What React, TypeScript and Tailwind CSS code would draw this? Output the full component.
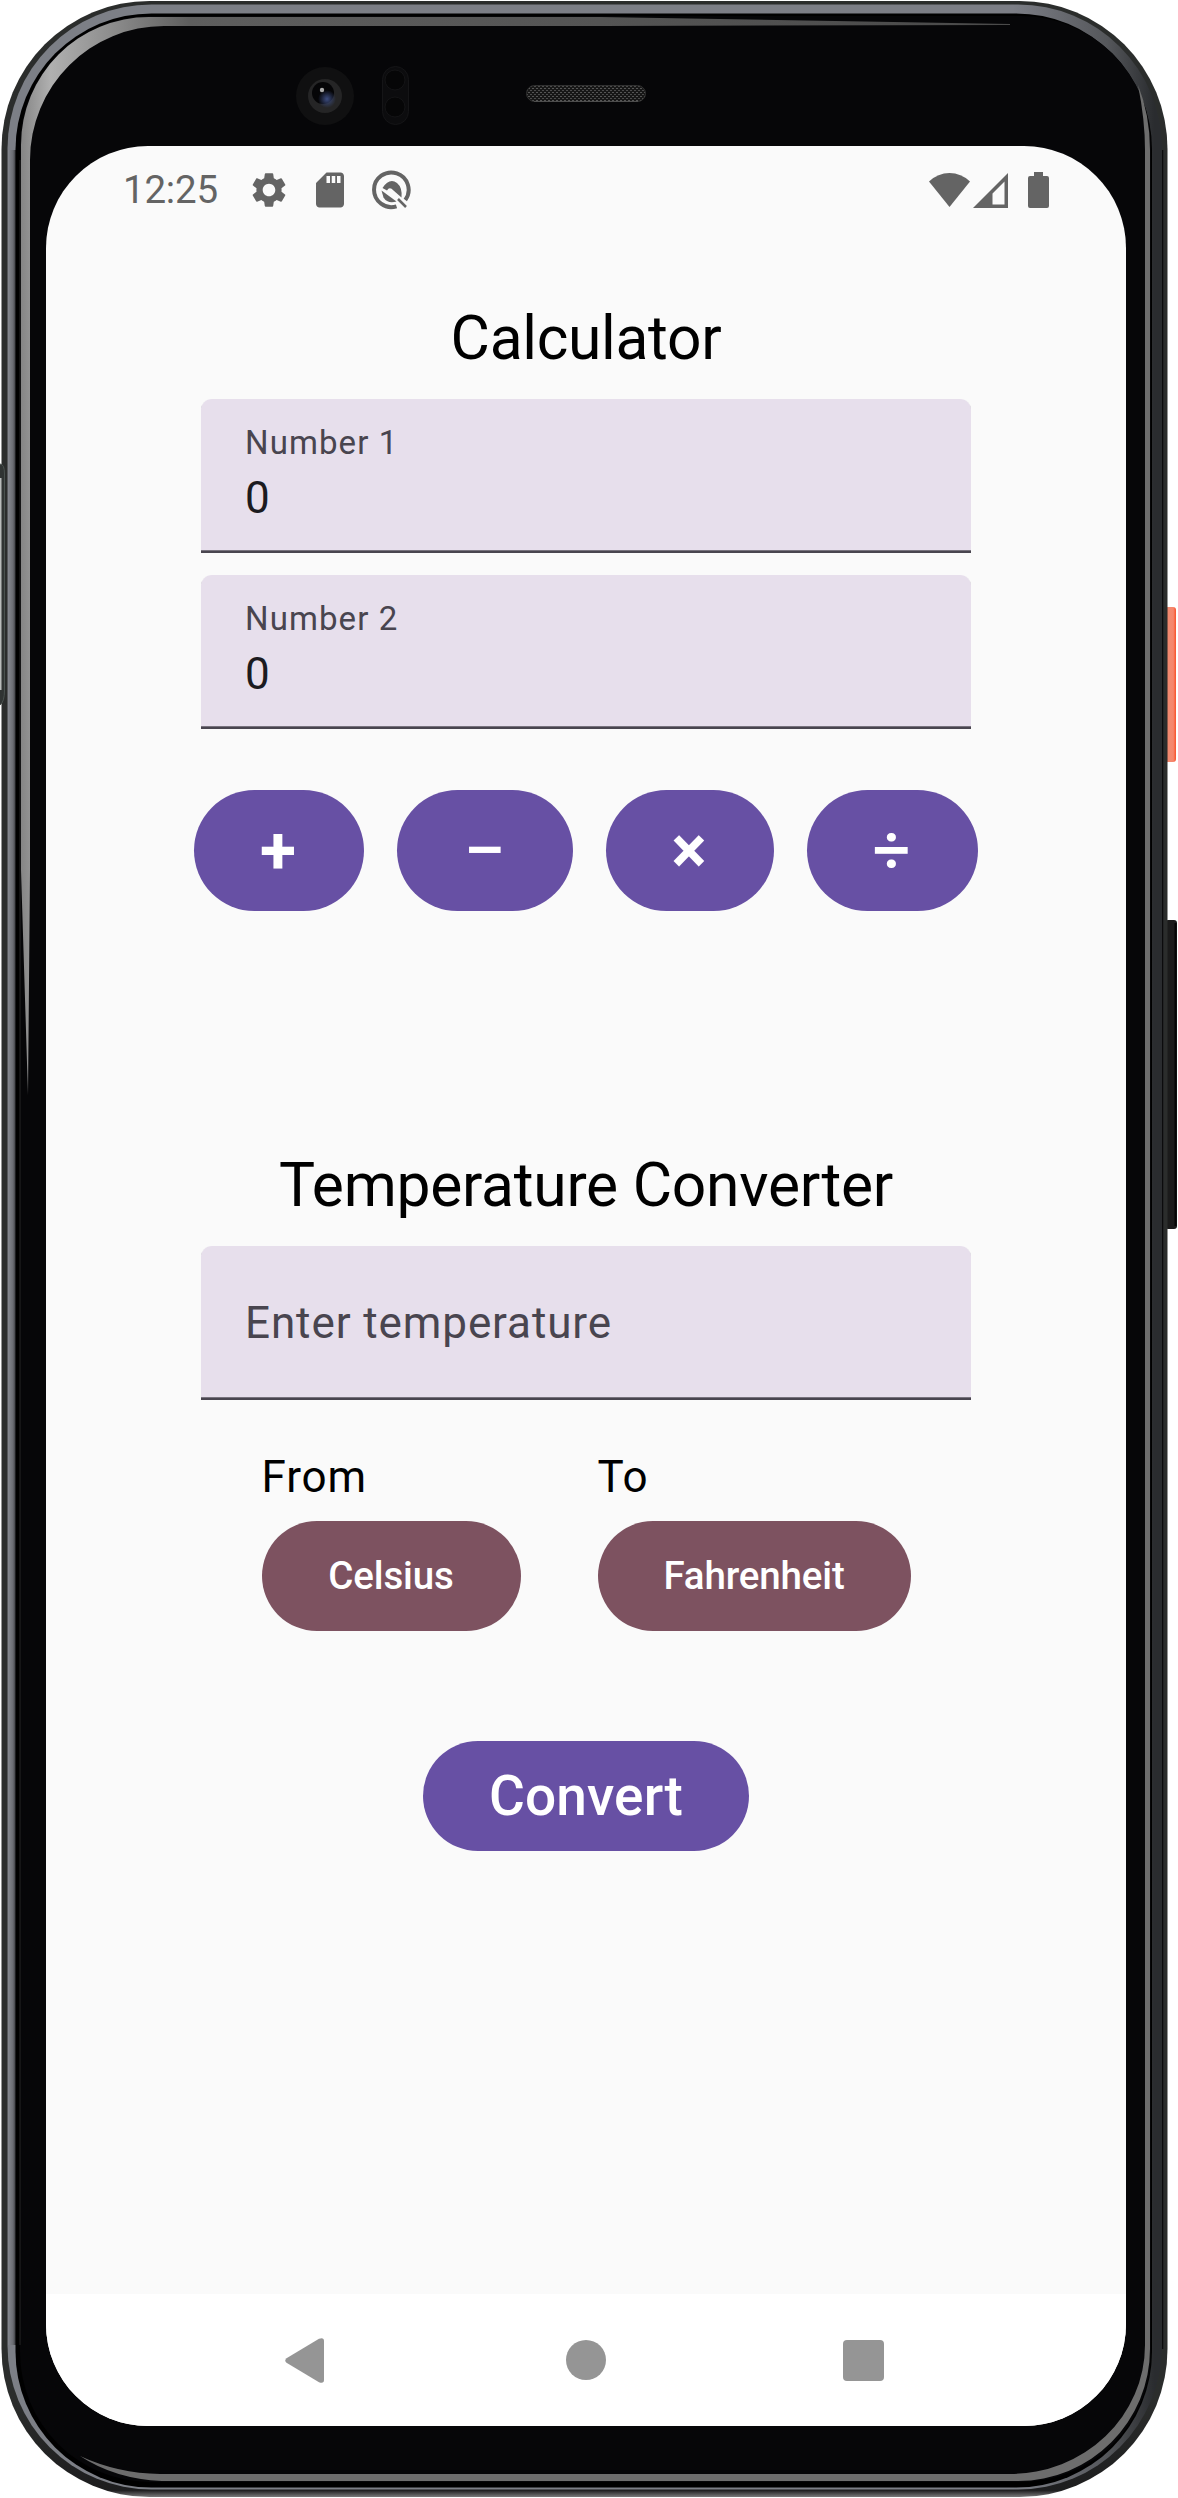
import React from "react";
import { MdSettings, MdSdCard } from "react-icons/md";

function Bezel() {
  return (
    <svg className="absolute inset-0" width="1178" height="2498" viewBox="0 0 1178 2498" aria-hidden="true">
      <defs>
        <linearGradient id="rim" gradientUnits="userSpaceOnUse" x1="0" y1="0" x2="1178" y2="0">
          <stop offset="0" stopColor="#7c7f86" />
          <stop offset="0.86" stopColor="#7c7e86" />
          <stop offset="0.94" stopColor="#55575b" />
          <stop offset="0.98" stopColor="#2a2c2f" />
        </linearGradient>
        <linearGradient id="rimShade" x1="0" y1="0" x2="1" y2="0">
          <stop offset="0" stopColor="#85888f" />
          <stop offset="0.5" stopColor="#6b6d73" />
          <stop offset="1" stopColor="#0c0c0d" />
        </linearGradient>
        <linearGradient id="glassTop" gradientUnits="userSpaceOnUse" x1="21" y1="0" x2="1010" y2="0">
          <stop offset="0" stopColor="#858585" />
          <stop offset="0.03" stopColor="#b0b0b0" />
          <stop offset="0.1" stopColor="#888888" />
          <stop offset="0.17" stopColor="#5e5e5e" />
          <stop offset="1" stopColor="#4a4a4a" />
        </linearGradient>
        <linearGradient id="foot" gradientUnits="userSpaceOnUse" x1="0" y1="2400" x2="0" y2="2497">
          <stop offset="0" stopColor="#2b2d2c" />
          <stop offset="0.93" stopColor="#1d1d1e" />
          <stop offset="1" stopColor="#7a7a7b" />
        </linearGradient>
        <linearGradient id="power" x1="0" y1="0" x2="1" y2="0">
          <stop offset="0" stopColor="#e0633f" />
          <stop offset="0.3" stopColor="#f28a70" />
          <stop offset="0.75" stopColor="#f6866c" />
          <stop offset="1" stopColor="#f8512a" />
        </linearGradient>
        <pattern id="mesh" width="4" height="4" patternUnits="userSpaceOnUse">
          <rect width="4" height="4" fill="#171717" />
          <rect width="2" height="1" fill="#555" />
          <rect x="2" y="2" width="2" height="1" fill="#4b4b4b" />
        </pattern>
        <radialGradient id="lens">
          <stop offset="0" stopColor="#3d4d80" />
          <stop offset="1" stopColor="#3d4d80" stopOpacity="0" />
        </radialGradient>
      </defs>
      <rect x="1165" y="607" width="11" height="155" rx="3" fill="url(#power)" />
      <rect x="1165" y="920" width="12" height="309" rx="3" fill="#1b1b1b" />
      <path d="M1175.500 923V1226" stroke="#050505" strokeWidth="2" />
      <rect x="1.500" y="1" width="1166" height="2496" rx="148" fill="url(#foot)" />
      <path d="M1162.500 150V2349" stroke="#0b0b0c" strokeWidth="1.500" />
      <rect x="7.500" y="4.500" width="1154.500" height="2485" rx="144" fill="url(#rim)" />
      <rect x="8" y="150" width="10" height="2195" fill="url(#rimShade)" />
      <rect x="15.500" y="13.500" width="1136.500" height="2474" rx="136" fill="#000" />
      <rect x="20" y="16" width="1131" height="2466" rx="130" fill="#060608" />
      <path
        d="M28 1095L21 870V145A128 128 0 0 1 149 17H600L1010 24V25L600 26H164A134 134 0 0 0 30 160V870Z"
        fill="url(#glassTop)"
      />
      <path
        d="M1138 85Q1150 115 1150 150V2349A132 132 0 0 1 1018 2481H162Q115 2479 80 2456Q118 2473.500 160 2474H1010A135 129 0 0 0 1145 2345V150Q1145 120 1138 85Z"
        fill="#6d6d6d"
      />
      <path d="M20 160V2345" stroke="#252525" strokeWidth="1" />
      <path d="M0 464Q4.500 464 4.500 474V690Q4.500 702 0 705" fill="#303433" stroke="#4a524f" />
      <rect x="0" y="478" width="1.500" height="212" fill="#b9bcbb" />
      <circle cx="325" cy="96" r="29" fill="#101011" />
      <circle cx="325" cy="96" r="17" fill="#252526" />
      <circle cx="323" cy="93" r="11" fill="#050507" />
      <circle cx="327" cy="99" r="9" fill="url(#lens)" />
      <circle cx="322" cy="90" r="2.200" fill="#aaa" />
      <rect x="382.500" y="66.500" width="26" height="58" rx="13" fill="#0c0c0e" stroke="#151517" />
      <circle cx="395" cy="80" r="10" fill="#060607" stroke="#141416" />
      <circle cx="395" cy="107" r="10" fill="#060607" stroke="#141416" />
      <rect x="526.500" y="85.500" width="119" height="16" rx="8" fill="url(#mesh)" stroke="#303030" />
      <path d="M534 101.500H638" stroke="#4c4c4c" />
    </svg>
  );
}

function StatusBar() {
  return (
    <div className="flex h-[88px] shrink-0 items-center pl-[77px] pr-[77px] text-[#646464]">
      <span className="w-[106px] text-[38.5px] leading-[44px] tracking-[-0.2px]">12:25</span>
      <MdSettings className="ml-[19px] size-[42px] shrink-0" />
      <MdSdCard className="ml-[19px] size-[42px] shrink-0" />
      <svg className="ml-[20px] shrink-0" width="40" height="40" viewBox="0 0 40 40" fill="none">
        <path d="M25.500 36.300A17.300 17.300 0 1 1 34.300 30" stroke="currentColor" strokeWidth="4" />
        <path d="M11.500 18Q18.500 7.500 26 13Q31.500 17.500 30.500 27.500L22.500 20.500Q18.500 16 16 20.500Z" fill="currentColor" />
        <path d="M10.500 20.500L25.500 31.500Q16.500 34 12.500 27.500Z" fill="currentColor" />
        <path d="M27 29L35 37" stroke="currentColor" strokeWidth="2.500" />
      </svg>
      <svg className="ml-auto shrink-0" width="41" height="36" viewBox="0 0 41 36" fill="currentColor">
        <path d="M0 9.500Q9 1 20.500 1T41 9.500L20.500 35Z" />
      </svg>
      <svg className="ml-[3px] shrink-0" width="35" height="36" viewBox="0 0 35 36" fill="currentColor">
        <path fillRule="evenodd" d="M35 1V36H0ZM31.500 9.500L19.500 21.500V32.500H31.500Z" />
      </svg>
      <svg className="ml-[20px] shrink-0" width="21" height="36" viewBox="0 0 21 36" fill="currentColor">
        <path d="M6 0H15V4H19A2 2 0 0 1 21 6V34A2 2 0 0 1 19 36H2A2 2 0 0 1 0 34V6A2 2 0 0 1 2 4H6Z" />
      </svg>
    </div>
  );
}

function Field({ label, value }: { label: string; value?: string }) {
  return (
    <div className="flex h-[154px] w-[770px] flex-col justify-center rounded-t-[11px] border-b-2 border-[#49454f] bg-[#e7dfec] px-[44px] pt-[2px] shadow-[inset_0_-1px_#78737e]">
      {value === undefined ? (
        <span className="text-[44px] leading-[66px] tracking-[0.9px] text-[#49454f]">{label}</span>
      ) : (
        <>
          <span className="text-[33px] leading-[44px] tracking-[1.1px] text-[#49454f]">{label}</span>
          <span className="text-[44px] leading-[66px] text-[#1c1b1f]">{value}</span>
        </>
      )}
    </div>
  );
}

const pill = "flex items-center justify-center rounded-full font-medium text-white";

export default function App() {
  return (
    <div className="relative h-[2498px] w-[1178px] overflow-hidden bg-white pl-[46px] pt-[146px] font-['Roboto',sans-serif]">
      <Bezel />
      <div className="relative flex h-[2280px] w-[1080px] flex-col overflow-hidden rounded-[102px] bg-[#fafafa]">
        <StatusBar />
        <main className="flex grow flex-col items-center">
          <h1 className="mt-[66px] text-[60.5px] leading-[77px] tracking-[-0.3px] text-black">Calculator</h1>
          <div className="mt-[22px] flex flex-col gap-[22px]">
            <Field label="Number 1" value="0" />
            <Field label="Number 2" value="0" />
          </div>
          <div className="mt-[61px] flex gap-[33px] text-[66px]">
            <button className={`${pill} h-[121px] w-[170px] bg-[#6750a4]`}>
              <span className="-translate-x-px font-bold">+</span>
            </button>
            <button className={`${pill} h-[121px] w-[176px] bg-[#6750a4]`}>
              <span className="scale-x-[1.15]">−</span>
            </button>
            <button className={`${pill} h-[121px] w-[168px] bg-[#6750a4]`}>
              <span className="-translate-x-px font-bold">×</span>
            </button>
            <button className={`${pill} h-[121px] w-[171px] bg-[#6750a4]`}>
              <span className="-translate-x-px">÷</span>
            </button>
          </div>
          <h2 className="mt-[236px] text-[60.5px] leading-[77px] tracking-[-0.25px] text-black">Temperature Converter</h2>
          <div className="mt-[22px]">
            <Field label="Enter temperature" />
          </div>
          <div className="mt-[44px] flex gap-[77px] text-black">
            <div className="flex flex-col gap-[11px]">
              <span className="text-[44px] leading-[66px] tracking-[0.9px]">From</span>
              <button className={`${pill} h-[110px] w-[259px] bg-[#7d5260] text-[38.5px] tracking-[-0.15px]`}>Celsius</button>
            </div>
            <div className="flex flex-col gap-[11px]">
              <span className="text-[44px] leading-[66px] tracking-[0.9px]">To</span>
              <button className={`${pill} h-[110px] w-[313px] bg-[#7d5260] text-[38.5px] tracking-[-0.15px]`}>Fahrenheit</button>
            </div>
          </div>
          <button className={`${pill} mt-[110px] h-[110px] w-[326px] bg-[#6750a4] text-[55px] tracking-[0.1px]`}>Convert</button>
        </main>
        <nav className="flex h-[132px] shrink-0 items-center bg-white pl-[239px] text-[#959595]">
          <svg width="39" height="45" viewBox="0 0 39 45" fill="currentColor">
            <path d="M1.500 20.200L34 0.800Q39 -1 39 3V42Q39 46 34 44.200L1.500 24.800Q-1 22.500 1.500 20.200Z" />
          </svg>
          <span className="ml-[242px] size-[40px] rounded-full bg-current" />
          <span className="ml-[237px] size-[41px] rounded-[4px] bg-current" />
        </nav>
      </div>
    </div>
  );
}
